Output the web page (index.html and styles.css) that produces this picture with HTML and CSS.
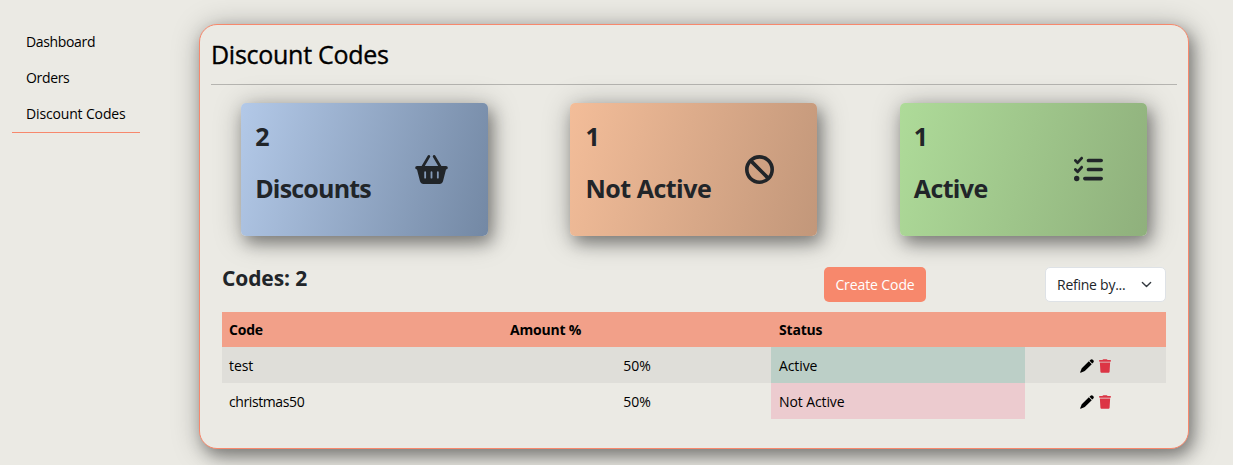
FILE: index.html
```html
<!DOCTYPE html>
<html lang="en">
<head>
<meta charset="utf-8">
<title>Discount Codes</title>
<link rel="stylesheet" href="styles.css">
</head>
<body>
<svg class="sprite" aria-hidden="true">
  <symbol id="pencil" viewBox="0 0 512 512"><path d="M385 26c26-26 58-26 84 0l17 17c26 26 26 58 0 84l-38 38-101-101zM324 82l106 106-246 246c-8 8-18 14-28 17L24 505c-9 3-22-8-19-17l52-132c4-10 9-20 17-28z"/></symbol>
  <symbol id="trash" viewBox="0 0 448 512"><path d="M135 18 128 32H32a32 32 0 0 0 0 64h384a32 32 0 0 0 0-64h-96l-7-14C308 7 296 0 284 0H164c-12 0-24 7-29 18zM416 128H32l21 339c2 25 23 45 48 45h246c25 0 46-20 48-45z"/></symbol>
</svg>
<div class="page">
  <nav class="sidebar">
    <a class="nav-link nav-dashboard">Dashboard</a>
    <a class="nav-link nav-orders">Orders</a>
    <a class="nav-link active">Discount Codes</a>
  </nav>
  <main class="panel">
    <h1 class="title"><span>Discount Codes</span></h1>
    <section class="cards">
      <article class="card blue">
        <div class="card-text"><span>2</span><span class="label-discounts">Discounts</span></div>
        <svg class="card-icon basket" viewBox="0 0 576 512"><path d="M253 3c12 7 16 21 10 33L170 192h236L313 36c-6-12-2-26 10-33s26-2 33 10l107 179h81a32 32 0 0 1 0 64l-53 208c-7 28-32 48-62 48H147c-29 0-55-20-62-48L32 256a32 32 0 0 1 0-64h81L220 13c7-12 21-16 33-10zM192 304c0-9-7-16-16-16s-16 7-16 16v96c0 9 7 16 16 16s16-7 16-16zm96-16c-9 0-16 7-16 16v96c0 9 7 16 16 16s16-7 16-16v-96c0-9-7-16-16-16zm128 16c0-9-7-16-16-16s-16 7-16 16v96c0 9 7 16 16 16s16-7 16-16z" fill-rule="evenodd"/></svg>
      </article>
      <article class="card orange">
        <div class="card-text"><span>1</span><span class="label-inactive">Not Active</span></div>
        <svg class="card-icon" viewBox="0 0 512 512"><path d="M367 413 99 145C77 176 64 215 64 256c0 106 86 192 192 192 42 0 80-13 111-35zm46-46c22-31 35-69 35-111 0-106-86-192-192-192-41 0-80 13-111 35zM0 256a256 256 0 1 1 512 0 256 256 0 1 1-512 0z"/></svg>
      </article>
      <article class="card green">
        <div class="card-text"><span>1</span><span class="label-active">Active</span></div>
        <svg class="card-icon" viewBox="0 0 512 512"><path d="M152 38c10 9 11 24 2 34l-72 80a24 24 0 0 1-35 1L7 113a24 24 0 0 1 34-34l22 22 55-61c9-10 24-11 34-2zm0 160c10 9 11 24 2 34l-72 80a24 24 0 0 1-35 1L7 273a24 24 0 0 1 34-34l22 22 55-61c9-10 24-11 34-2zM224 96c0-18 14-32 32-32h224a32 32 0 0 1 0 64H256c-18 0-32-14-32-32zm0 160c0-18 14-32 32-32h224a32 32 0 0 1 0 64H256c-18 0-32-14-32-32zm-64 160c0-18 14-32 32-32h288a32 32 0 0 1 0 64H192c-18 0-32-14-32-32zM48 368a48 48 0 1 1 0 96 48 48 0 1 1 0-96z"/></svg>
      </article>
    </section>
    <section class="codes">
      <header class="toolbar">
        <h2 class="count">Codes: 2</h2>
        <button class="create">Create Code</button>
        <div class="refine"><span>Refine by...</span>
          <svg class="chevron" viewBox="0 0 16 16"><path d="m2 5 6 6 6-6" fill="none" stroke="#343a40" stroke-width="2" stroke-linecap="round" stroke-linejoin="round"/></svg>
        </div>
      </header>
      <table class="table">
        <colgroup><col class="col-code"><col class="col-amount"><col class="col-status"><col class="col-actions"></colgroup>
        <thead><tr><th>Code</th><th>Amount %</th><th>Status</th><th></th></tr></thead>
        <tbody>
          <tr class="striped"><td>test</td><td class="amount">50%</td><td class="on">Active</td><td><div class="actions"><svg class="pencil"><use href="#pencil"/></svg><svg class="trash"><use href="#trash"/></svg></div></td></tr>
          <tr><td class="long-code">christmas50</td><td class="amount">50%</td><td class="off">Not Active</td><td><div class="actions"><svg class="pencil"><use href="#pencil"/></svg><svg class="trash"><use href="#trash"/></svg></div></td></tr>
        </tbody>
      </table>
    </section>
  </main>
</div>
</body>
</html>
```
FILE: styles.css
```css
* { box-sizing: border-box; }
body {
  margin: 0;
  height: 465px;
  overflow: hidden;
  background: #ebeae4;
  color: #000;
  font: 14px/22px "Open Sans", "Noto Sans", sans-serif;
}
.sprite { display: none; }
.page { display: flex; align-items: flex-start; padding: 24px 44px 0 12px; }
.sidebar { width: 128px; margin-right: 59px; flex: none; }
.nav-link { display: block; height: 36px; padding: 7px 14px; white-space: nowrap; letter-spacing: -.15px; }
.nav-dashboard { letter-spacing: -.35px; }
.nav-orders { letter-spacing: -.35px; }
.nav-link.active { height: 37px; border-bottom: 1px solid #f7886c; }
.panel {
  width: 990px;
  height: 425px;
  flex: none;
  border: 1px solid #f7886c;
  border-radius: 18px;
  background: #ebeae4;
  box-shadow: 4px 7px 16px rgba(0, 0, 0, .36), 2px 3px 30px rgba(0, 0, 0, .28);
}
.title {
  margin: 0 11px;
  height: 60px;
  padding-top: 11px;
  border-bottom: 1px solid #b5b4b0;
  font-size: 25px;
  line-height: 36px;
  font-weight: 500;
  letter-spacing: -.27px;
  -webkit-text-stroke: .35px #000;
}
.cards { display: grid; grid-template-columns: repeat(3, 1fr); justify-items: center; padding-top: 18px; }
.card {
  display: flex;
  justify-content: space-between;
  align-items: flex-start;
  width: 247px;
  height: 133px;
  padding: 15px 40px 0 14px;
  border-radius: 5px;
  color: #212529;
  box-shadow: 4px 7px 16px rgba(0, 0, 0, .36), 2px 3px 30px rgba(0, 0, 0, .28);
}
.blue { background: linear-gradient(105deg, #b3c9e8, #7388a4); }
.orange { background: linear-gradient(105deg, #f3bd99, #c2977a); }
.green { background: linear-gradient(105deg, #aedb99, #8fb07c); }
.card-text { display: grid; gap: 16px; font-size: 25px; line-height: 36px; font-weight: 700; white-space: nowrap; }
.label-discounts { letter-spacing: -.8px; }
.label-inactive { letter-spacing: -.5px; }
.label-active { letter-spacing: -.65px; }
.card-icon { width: 33px; height: 29px; margin-top: 37px; fill: #212529; flex: none; }
.orange .card-icon, .green .card-icon { width: 29px; margin-right: 3px; }
.green .card-icon { margin-right: 4px; }
.orange .card-text { padding-left: 1px; }
.codes { margin: 31px 22px 0; }
.toolbar { display: flex; height: 35px; margin-bottom: 10px; }
.count { width: 602px; margin: 0; font-size: 21px; line-height: 22px; color: #212529; letter-spacing: -.1px; }
.create {
  width: 102px;
  padding: 1px 0 0;
  border: 0;
  border-radius: 5px;
  background: #f7886c;
  color: #fff;
  font: inherit;
  letter-spacing: -.1px;
}
.refine {
  display: flex;
  align-items: center;
  justify-content: space-between;
  width: 121px;
  margin-left: auto;
  padding: 1px 13px 0 11px;
  border: 1px solid #dee2e6;
  border-radius: 5px;
  background: #fff;
  color: #212529;
  letter-spacing: -.25px;
}
.chevron { width: 11px; height: 11px; margin-top: -2px; }
.table { width: 944px; border-collapse: collapse; table-layout: fixed; }
.col-code { width: 281px; }
.col-amount { width: 268px; }
.col-status { width: 254px; }
.col-actions { width: 141px; }
th, td { height: 36px; padding: 0 7px; text-align: left; }
td { padding-top: 2px; letter-spacing: -.1px; }
.long-code { letter-spacing: -.4px; }
td:nth-child(3), th:nth-child(3) { padding-left: 8px; }
th { height: 35px; background: #f2a089; font-weight: 700; letter-spacing: -.2px; }
.striped { background: #dfded9; }
td.amount { text-align: center; }
.on { background: #bccfc7; }
.off { background: #eccbcf; }
.actions { display: flex; justify-content: center; align-items: center; gap: 5px; }
.pencil { width: 14px; height: 14px; }
.trash { width: 12px; height: 14px; fill: #dc3545; }
```
